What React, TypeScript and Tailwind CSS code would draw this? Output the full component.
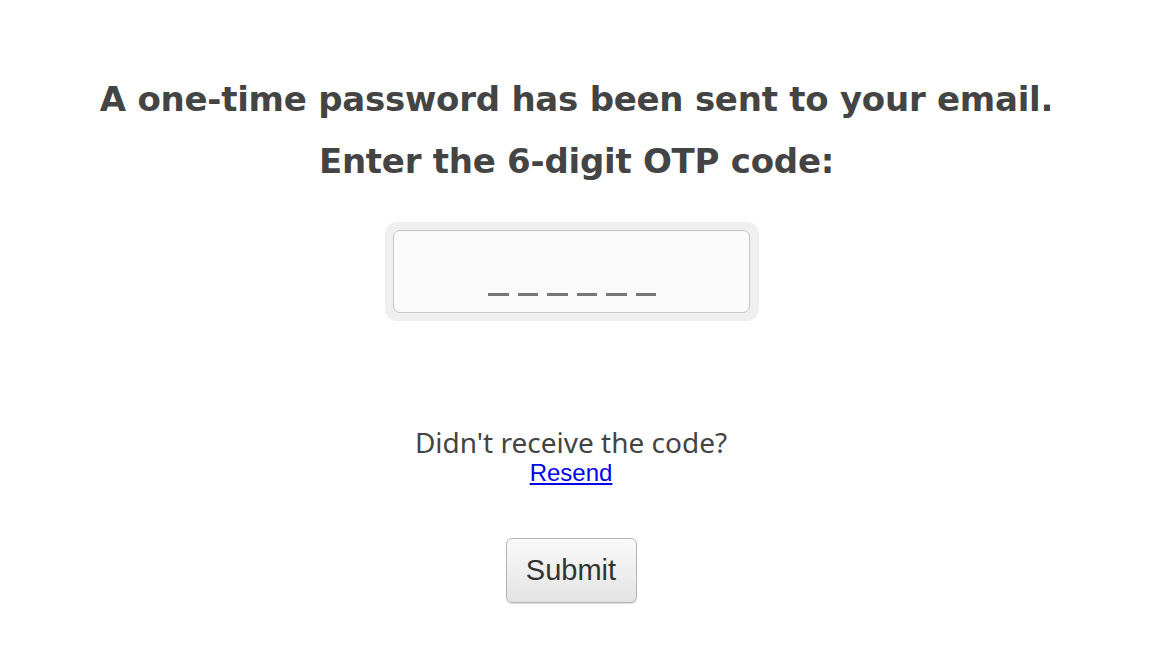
export default function App() {
  return (
    <div className="min-h-[668px] w-full bg-white flex flex-col items-center pt-[68px] pr-[34px]">
      <h1 className="ml-[11px] text-center font-bold text-[#444444] text-[34px] leading-[62px] tracking-[-0.25px] font-['DejaVu_Sans',sans-serif]">
        A one-time password has been sent to your email.
        <br />
        Enter the 6-digit OTP code:
      </h1>

      <div className="mt-[30px] ml-[1px] rounded-[12px] bg-[#efefef] p-[8px] pr-[9px]">
        <div className="w-[357px] h-[83px] rounded-[7px] border border-[#c6c6c6] bg-[#fafafa] flex items-end justify-center pb-[16px] pl-[2px]">
          <div className="flex gap-[9px]">
            {[0, 1, 2, 3, 4, 5].map((i) => (
              <div key={i} className="w-[20.5px] h-[3px] bg-[#777777]" />
            ))}
          </div>
        </div>
      </div>

      <p className="mt-[105px] text-[28px] leading-[32px] text-[#444444] font-['Noto_Sans',sans-serif]">
        Didn't receive the code?
      </p>
      <a href="#" className="text-[24px] leading-[30px] text-[#0000ee] underline font-['Liberation_Sans',sans-serif]">
        Resend
      </a>

      <button className="mt-[50px] w-[131px] h-[65px] rounded-[6px] border border-[#b5b5b5] bg-gradient-to-b from-[#fafafa] to-[#e3e3e3] text-[29px] text-[#333333] font-['Liberation_Sans',sans-serif] shadow-[0_1px_1px_rgba(0,0,0,0.15)]">
        Submit
      </button>
    </div>
  );
}
